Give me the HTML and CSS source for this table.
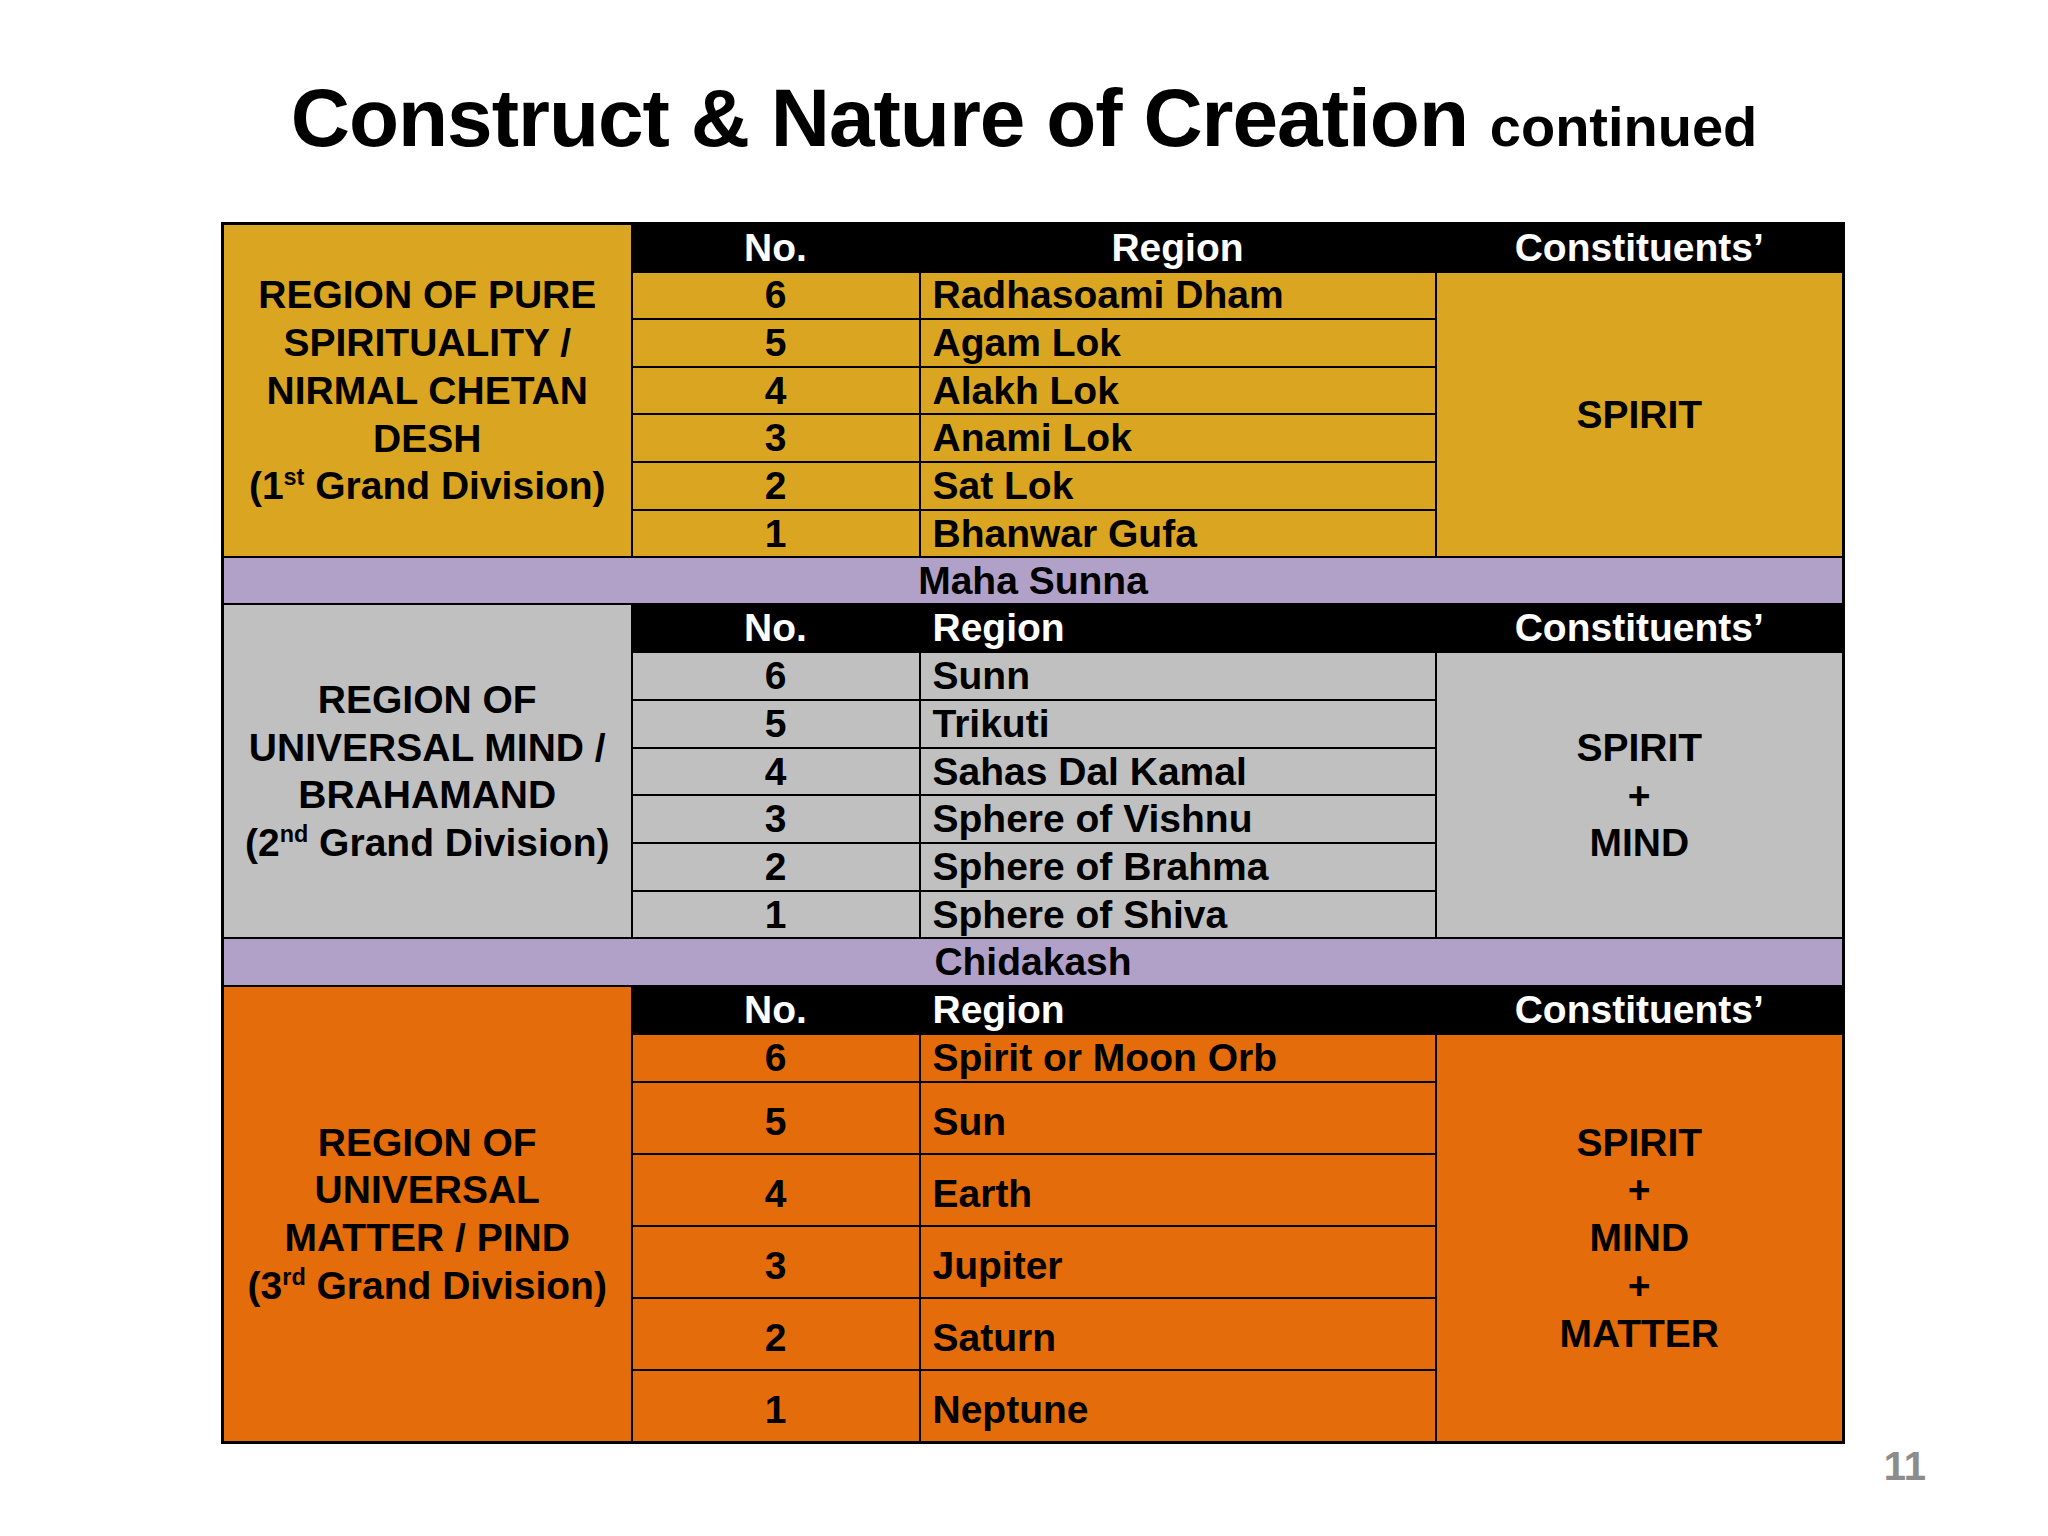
FILE: index.html
```html
<!DOCTYPE html>
<html lang="en">
<head>
<meta charset="utf-8">
<title>Construct &amp; Nature of Creation continued</title>
<link rel="stylesheet" href="styles.css">
</head>
<body>
<div class="slide">
  <h1 class="title">Construct &amp; Nature of Creation <span class="title-sub">continued</span></h1>

  <table class="chart">
    <colgroup>
      <col class="c-label">
      <col class="c-no">
      <col class="c-name">
      <col class="c-const">
    </colgroup>
    <tbody>
      <!-- 1st Grand Division -->
      <tr class="head">
        <td rowspan="7" class="label gold">REGION OF PURE<br>SPIRITUALITY /<br>NIRMAL CHETAN<br>DESH<br>(1<sup>st</sup> Grand Division)</td>
        <th class="h-no">No.</th>
        <th class="h-name centered">Region</th>
        <th class="h-const">Constituents’</th>
      </tr>
      <tr class="row gold"><td class="no">6</td><td class="name">Radhasoami Dham</td><td rowspan="6" class="const">SPIRIT</td></tr>
      <tr class="row gold"><td class="no">5</td><td class="name">Agam Lok</td></tr>
      <tr class="row gold"><td class="no">4</td><td class="name">Alakh Lok</td></tr>
      <tr class="row gold"><td class="no">3</td><td class="name">Anami Lok</td></tr>
      <tr class="row gold"><td class="no">2</td><td class="name">Sat Lok</td></tr>
      <tr class="row gold"><td class="no">1</td><td class="name">Bhanwar Gufa</td></tr>

      <tr class="band band-1"><td colspan="4">Maha Sunna</td></tr>

      <!-- 2nd Grand Division -->
      <tr class="head">
        <td rowspan="7" class="label grey">REGION OF<br>UNIVERSAL MIND /<br>BRAHAMAND<br>(2<sup>nd</sup> Grand Division)</td>
        <th class="h-no">No.</th>
        <th class="h-name">Region</th>
        <th class="h-const">Constituents’</th>
      </tr>
      <tr class="row grey"><td class="no">6</td><td class="name">Sunn</td><td rowspan="6" class="const">SPIRIT<br>+<br>MIND</td></tr>
      <tr class="row grey"><td class="no">5</td><td class="name">Trikuti</td></tr>
      <tr class="row grey"><td class="no">4</td><td class="name">Sahas Dal Kamal</td></tr>
      <tr class="row grey"><td class="no">3</td><td class="name">Sphere of Vishnu</td></tr>
      <tr class="row grey"><td class="no">2</td><td class="name">Sphere of Brahma</td></tr>
      <tr class="row grey"><td class="no">1</td><td class="name">Sphere of Shiva</td></tr>

      <tr class="band band-2"><td colspan="4">Chidakash</td></tr>

      <!-- 3rd Grand Division -->
      <tr class="head">
        <td rowspan="7" class="label orange">REGION OF<br>UNIVERSAL<br>MATTER / PIND<br>(3<sup>rd</sup> Grand Division)</td>
        <th class="h-no">No.</th>
        <th class="h-name">Region</th>
        <th class="h-const">Constituents’</th>
      </tr>
      <tr class="row orange"><td class="no">6</td><td class="name">Spirit or Moon Orb</td><td rowspan="6" class="const">SPIRIT<br>+<br>MIND<br>+<br>MATTER</td></tr>
      <tr class="row tall orange"><td class="no">5</td><td class="name">Sun</td></tr>
      <tr class="row tall orange"><td class="no">4</td><td class="name">Earth</td></tr>
      <tr class="row tall orange"><td class="no">3</td><td class="name">Jupiter</td></tr>
      <tr class="row tall orange"><td class="no">2</td><td class="name">Saturn</td></tr>
      <tr class="row tall orange"><td class="no">1</td><td class="name">Neptune</td></tr>
    </tbody>
  </table>

  <div class="page-foot"><span class="page-no">11</span></div>
</div>
</body>
</html>
```

FILE: styles.css
```css
html, body {
  margin: 0;
  padding: 0;
  background: #ffffff;
}

body {
  width: 2048px;
  height: 1536px;
  overflow: hidden;
  font-family: "Liberation Sans", Arial, sans-serif;
  color: #000;
}

.slide {
  display: flex;
  flex-direction: column;
  align-items: center;
}

.title {
  margin: 77px 0 0;
  height: 81px;
  font-size: 82px;
  line-height: 81px;
  font-weight: 700;
  letter-spacing: -1px;
  white-space: nowrap;
  text-align: center;
}

.title-sub {
  font-size: 56px;
  letter-spacing: 0;
}

.chart {
  align-self: flex-start;
  margin-top: 64px;
  margin-left: 221px;
  width: 1622px;
  table-layout: fixed;
  border-collapse: collapse;
  border: 3px solid #000;
  font-size: 39px;
  font-weight: 700;
  line-height: 40px;
}

.c-label { width: 409px; }
.c-no { width: 288px; }
.c-name { width: 516px; }
.c-const { width: 408px; }

.chart td,
.chart th {
  padding: 0;
  border: 2px solid #000;
  white-space: nowrap;
  overflow: hidden;
}

.head {
  height: 48px;
}

.head th {
  background: #000;
  color: #fff;
  font-weight: 700;
  text-align: center;
  vertical-align: middle;
}

.head th.h-name {
  text-align: left;
  padding-left: 12px;
}

.head th.h-name.centered {
  text-align: center;
  padding-left: 0;
}

.row {
  height: 47.67px;
}

.row.tall {
  height: 72px;
}

.row.tall td.no,
.row.tall td.name {
  padding-top: 8px;
}

.label {
  text-align: center;
  vertical-align: middle;
  line-height: 47.7px;
}

.no {
  text-align: center;
  vertical-align: middle;
}

.name {
  text-align: left;
  padding-left: 12px !important;
  vertical-align: middle;
}

.const {
  text-align: center;
  vertical-align: middle;
  line-height: 47.7px;
}

.gold td,
td.gold {
  background: #daa520;
}

.grey td,
td.grey {
  background: #c0c0c0;
}

.orange td,
td.orange {
  background: #e46c0a;
}

.band td {
  background: #b1a0c7;
  text-align: center;
  vertical-align: middle;
}

.band-1 { height: 47px; }
.band-2 { height: 48px; }

sup {
  font-size: 0.6em;
  line-height: 0;
  vertical-align: 0.62em;
}

.page-foot {
  align-self: stretch;
  display: flex;
  justify-content: flex-end;
  padding-right: 122px;
  margin-top: 2px;
}

.page-no {
  font-size: 40px;
  line-height: 40px;
  font-weight: 700;
  color: #8c8c8c;
}
```
